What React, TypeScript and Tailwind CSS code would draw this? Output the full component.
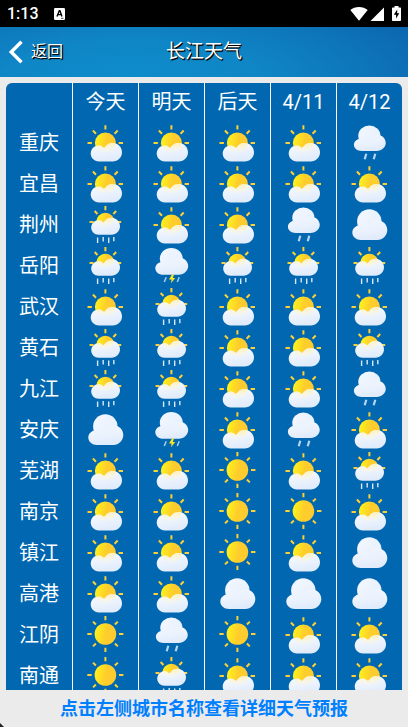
import type { ReactNode } from "react";

type Weather = "sunny" | "partly" | "sunRain" | "cloudy" | "rain" | "thunder";

interface Forecast {
  city: string;
  days: Weather[];
}

const DAYS = ["今天", "明天", "后天", "4/11", "4/12"];

const FORECASTS: Forecast[] = [
  { city: "重庆", days: ["partly", "partly", "partly", "partly", "rain"] },
  { city: "宜昌", days: ["partly", "partly", "partly", "partly", "partly"] },
  { city: "荆州", days: ["sunRain", "partly", "partly", "rain", "cloudy"] },
  { city: "岳阳", days: ["sunRain", "thunder", "sunRain", "sunRain", "sunRain"] },
  { city: "武汉", days: ["partly", "sunRain", "partly", "partly", "partly"] },
  { city: "黄石", days: ["sunRain", "sunRain", "partly", "partly", "sunRain"] },
  { city: "九江", days: ["sunRain", "sunRain", "partly", "partly", "rain"] },
  { city: "安庆", days: ["cloudy", "thunder", "partly", "rain", "partly"] },
  { city: "芜湖", days: ["partly", "partly", "sunny", "partly", "sunRain"] },
  { city: "南京", days: ["partly", "partly", "sunny", "sunny", "partly"] },
  { city: "镇江", days: ["partly", "partly", "sunny", "partly", "cloudy"] },
  { city: "高港", days: ["partly", "partly", "cloudy", "cloudy", "cloudy"] },
  { city: "江阴", days: ["sunny", "rain", "sunny", "partly", "partly"] },
  { city: "南通", days: ["sunny", "sunRain", "partly", "partly", "partly"] },
];

const LABELS: Record<Weather, string> = {
  sunny: "晴",
  partly: "多云",
  sunRain: "阵雨",
  cloudy: "阴",
  rain: "小雨",
  thunder: "雷阵雨",
};

// Shared gradients, referenced by every icon in the table
const IconDefs = () => (
  <svg className="absolute size-0" aria-hidden="true">
    <defs>
      <linearGradient id="sun" x1="0" y1="0.3" x2="1" y2="0.5">
        <stop offset="0" stopColor="#fff41a" />
        <stop offset="0.55" stopColor="#fecd2c" />
        <stop offset="1" stopColor="#fecb30" />
      </linearGradient>
      <linearGradient id="cloud" x1="0" y1="0" x2="0.3" y2="1">
        <stop offset="0" stopColor="#fafcff" />
        <stop offset="1" stopColor="#e0ebfb" />
      </linearGradient>
      <linearGradient id="puff" x1="0" y1="0" x2="1" y2="0.6">
        <stop offset="0" stopColor="#f4f8ff" />
        <stop offset="1" stopColor="#e6f0fd" />
      </linearGradient>
      <linearGradient id="veil" x1="0" y1="0" x2="0" y2="1">
        <stop offset="0" stopColor="#fff0b0" stopOpacity="0.9" />
        <stop offset="1" stopColor="#fff8e0" stopOpacity="0.2" />
      </linearGradient>
    </defs>
  </svg>
);

// Low cloud used in front of the sun, 31 x 18 units
const FrontCloud = () => (
  <>
    <path
      d="M8 2.6c1.5 0 3 .5 4.3 1.7.7.8 1.2.7 1.8 0C16 1.500 18.700 0 22 0c5.200 0 9.300 4.100 9.300 9.300s-4.100 9.200-9.300 9.200H8c-4.400 0-8-3.500-8-7.900s3.600-8 8-8z"
      fill="url(#cloud)"
    />
    <path
      d="M5.500 3.200c2.600-1 5-.5 6.800 1.100.7.8 1.200.7 1.800 0C16 1.500 18.700 0 22 0c1 0 1.900.1 2.700.4-.4 5.200-4.700 9.100-9.900 9.100-4.400 0-8.200-2.400-9.300-6.300z"
      fill="url(#veil)"
    />
  </>
);

// Tall overcast cloud, 35 x 31 units
const BigCloud = () => (
  <>
    <circle cx="17" cy="12.2" r="12.2" fill="url(#puff)" />
    <path
      d="M9 15.700c2.800 0 5.200 1 7 2.700C17.800 14 21 11 25 11c5.600 0 10 4.300 10 9.800S30.600 30.700 25 30.700H8.500C3.800 30.700 0 27.500 0 23.200s4-7.500 9-7.500z"
      fill="url(#cloud)"
    />
    <path
      d="M16 18.400C17.800 14 21 11 25 11c1.400 0 2.700.3 3.900.8-.2 6.500-5.300 12.600-11.900 12.600-5.600 0-10-3.600-11.600-8.100 3.900-1.300 7.900-.5 10.600 2.100z"
      fill="#e9f1fd"
      fillOpacity="0.6"
    />
  </>
);

const Rays = ({ d }: { d: string }) => (
  <path d={d} fill="none" stroke="#fbd038" strokeWidth="2" />
);

const DRAWINGS: Record<Weather, ReactNode> = {
  sunny: (
    <>
      <circle cx="20.400" cy="18" r="10.800" fill="url(#sun)" />
      <Rays d="M20.400 0v4.300M20.400 31.700v4.300M2.300 18h4.400M34 18h4.400M8 5.600l2.900 2.900M29.900 27.500l2.900 2.900M32.800 5.600l-2.900 2.900M10.900 27.500L8 30.400" />
    </>
  ),
  partly: (
    <>
      <circle cx="20.400" cy="19" r="10.500" fill="url(#sun)" />
      <Rays d="M20.400 1.200v4.200M2.500 19h4.400M33.600 19H38M7.900 6.500l3.100 3.200M32.700 6.500l-3.100 3.200" />
      <g transform="translate(5.700 19)">
        <FrontCloud />
      </g>
    </>
  ),
  sunRain: (
    <>
      <circle cx="20.400" cy="16" r="9.200" fill="url(#sun)" />
      <Rays d="M20.400 0v4.300M4.500 16h4M32.200 16h4M9.600 5l2.900 3M31.200 5l-2.900 3" />
      <g transform="translate(6.200 11.800) scale(.92)">
        <FrontCloud />
      </g>
      <path
        d="M12.600 31.500v5.500M18.200 31v4.600M23.700 31.500v5.500M28.800 31v4.300"
        stroke="#d9e9fb"
        strokeWidth="1.400"
      />
    </>
  ),
  cloudy: (
    <g transform="translate(3.300 3.300)">
      <BigCloud />
    </g>
  ),
  rain: (
    <>
      <g transform="translate(4.900 1.500) scale(.91 .83)">
        <BigCloud />
      </g>
      <path
        d="M17.300 29.700l-1.600 5.500M26.300 29.700l-1.600 5.500"
        stroke="#b5d6f5"
        strokeWidth="2.200"
      />
    </>
  ),
  thunder: (
    <>
      <g transform="translate(4.300 1) scale(.94 .87)">
        <BigCloud />
      </g>
      <path d="M15.200 30.200L13.300 35M28.200 30.200L26.300 35" stroke="#a9cdf0" strokeWidth="1.500" />
      <path d="M21 27.500l-3 5h2.600l-.6 3.700 4.200-5.200h-2.500l1.400-3.500z" fill="#ffe71f" />
    </>
  ),
};

const WeatherIcon = ({ type }: { type: Weather }) => (
  <svg
    className="mx-auto block"
    width="41"
    height="41"
    viewBox="0 0 41 41"
    role="img"
    aria-label={LABELS[type]}
  >
    {DRAWINGS[type]}
  </svg>
);

const StatusBar = () => (
  <div className="flex h-[27px] shrink-0 items-center justify-between bg-black px-[7px] text-white">
    <div className="flex items-center gap-[15px]">
      <span className="font-[Roboto] text-base leading-7 font-medium">1:13</span>
      <svg width="11" height="12" viewBox="0 0 11 12" aria-hidden="true">
        <rect width="11" height="12" rx="1.200" fill="#fff" />
        <path d="M3 8.500L5.300 2.800h.6L8 8.500M3.900 6.600h3.300" fill="none" stroke="#000" strokeWidth="1.400" />
        <path d="M7 10.300h2.500" stroke="#555" strokeWidth="1" />
      </svg>
    </div>
    <div className="flex items-center" aria-hidden="true">
      <svg width="18" height="14" viewBox="0 0 18 14">
        <path d="M9 13.800L.3 3.100C2.700 1.100 5.700 0 9 0s6.300 1.100 8.700 3.100z" fill="#fff" />
      </svg>
      <svg className="ml-[2px]" width="14" height="14" viewBox="0 0 14 14">
        <path d="M14 .5V14H.5z" fill="#fff" />
      </svg>
      <svg className="ml-2" width="9" height="15" viewBox="0 0 9 15">
        <path d="M2.500 0h4v1.500H8c.6 0 1 .4 1 1V14c0 .6-.4 1-1 1H1c-.6 0-1-.4-1-1V2.500c0-.6.4-1 1-1h1.500z" fill="#fff" />
        <path d="M5.200 3.500L1.800 8.700h2.300v3.800l3.200-5.300H5.200z" fill="#000" />
      </svg>
    </div>
  </div>
);

const Header = () => (
  <header className="grid h-[50px] shrink-0 grid-cols-[1fr_auto_1fr] items-center bg-[radial-gradient(ellipse_90%_220%_at_32%_105%,#0e8ccb_0%,#0f86c6_35%,#0d72b8_70%,#0b5fab_100%)] text-white">
    <button
      type="button"
      className="flex items-center gap-2 pl-2 text-base [text-shadow:1px_1px_0_#000,1px_1px_1px_#000]"
    >
      <svg width="15" height="24" viewBox="0 0 15 24" aria-hidden="true">
        <path d="M13.500 1.800L3.200 12l10.300 10.200" fill="none" stroke="#fff" strokeWidth="3.400" />
      </svg>
      返回
    </button>
    <h1 className="text-[19px] [text-shadow:1px_1px_0_#000,1px_1px_1px_#000]">长江天气</h1>
  </header>
);

const ForecastTable = () => (
  <table className="w-full table-fixed border-separate border-spacing-0 overflow-hidden rounded-md bg-[#0067b0] text-xl text-white">
    <thead>
      <tr className="h-[41px] align-top">
        <td />
        {DAYS.map((day) => (
          <th key={day} scope="col" className="border-l border-white p-0 leading-[38px] font-normal">
            {day}
          </th>
        ))}
      </tr>
    </thead>
    <tbody>
      {FORECASTS.map(({ city, days }) => (
        <tr key={city} className="h-[41px] align-top">
          <th scope="row" className="p-0 font-normal">
            <a href="#detail" className="block leading-[38px]">
              {city}
            </a>
          </th>
          {days.map((type, i) => (
            <td key={DAYS[i]} className="border-l border-white p-0">
              <WeatherIcon type={type} />
            </td>
          ))}
        </tr>
      ))}
    </tbody>
  </table>
);

const App = () => (
  <div className="relative flex h-dvh flex-col bg-[#ebebeb] font-[Roboto,'Noto_Sans_CJK_SC',sans-serif]">
    <IconDefs />
    <StatusBar />
    <Header />
    <main className="min-h-0 flex-1 overflow-y-auto px-1.5 pt-1.5 [scrollbar-width:none]">
      <ForecastTable />
    </main>
    <footer className="h-[37px] shrink-0 text-center text-lg leading-[38px] font-bold text-[#007fff]">
      点击左侧城市名称查看详细天气预报
    </footer>
    <svg className="absolute bottom-0 left-0" width="4" height="4" viewBox="0 0 4 4" aria-hidden="true">
      <path d="M0 0l4 4H0z" fill="#222" />
    </svg>
  </div>
);

export default App;
